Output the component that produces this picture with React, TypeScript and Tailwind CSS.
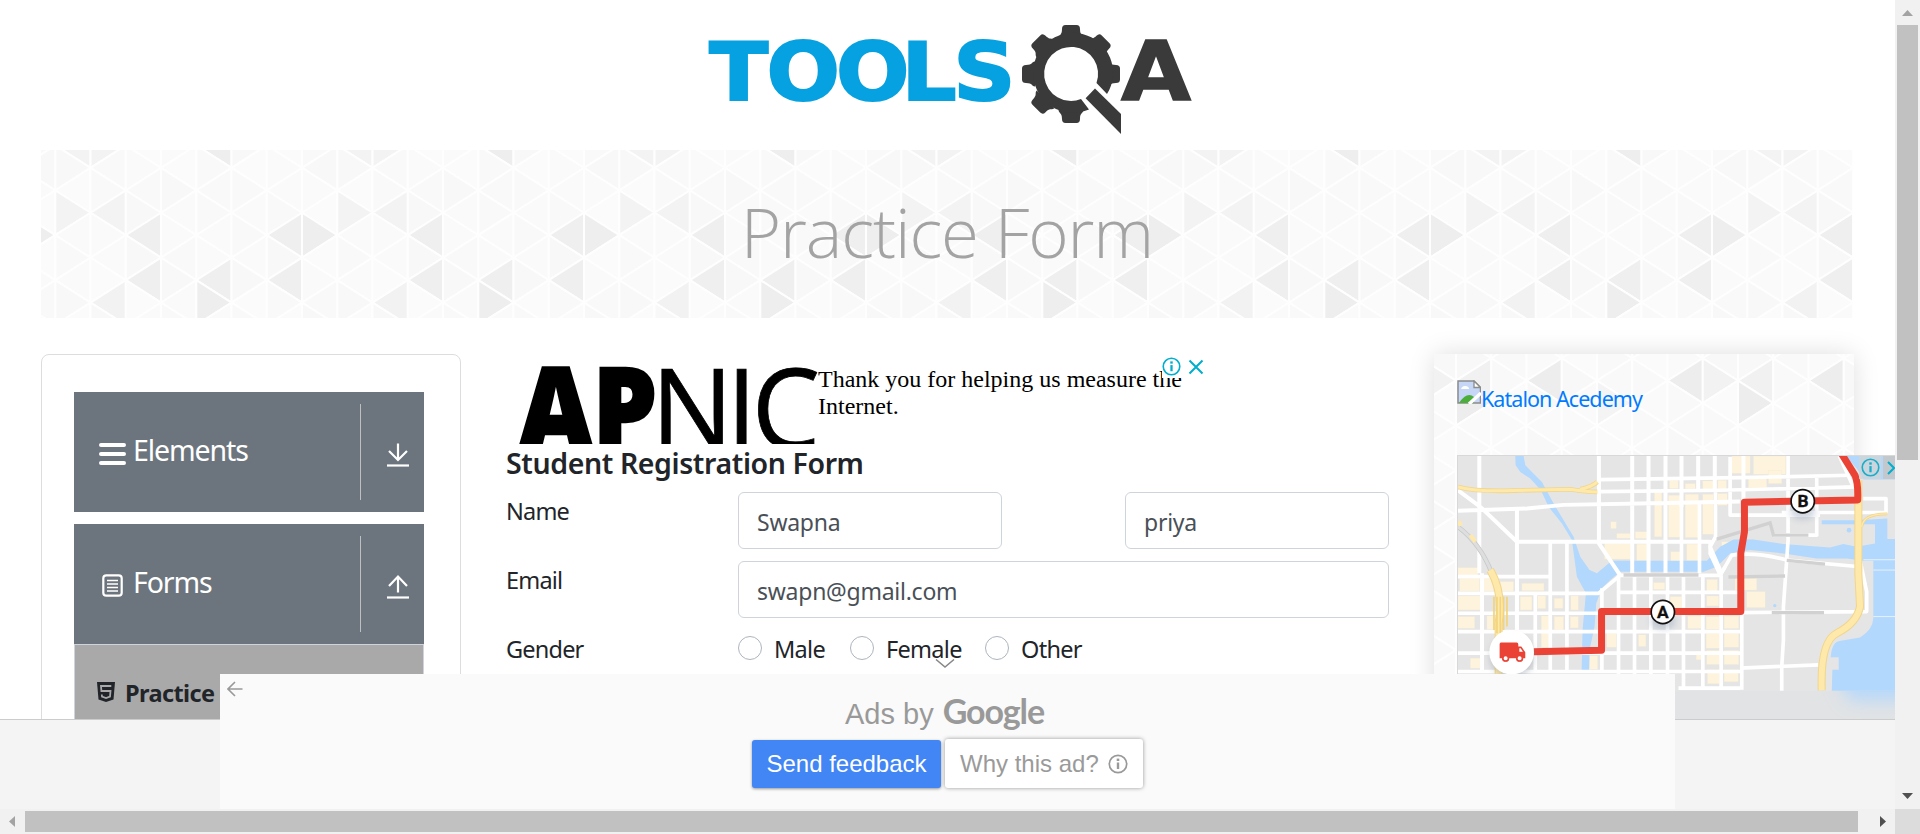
import React from "react";

const BODY = "font-['Noto_Sans','Open_Sans',sans-serif]";

type Tri = { c: number; y: number; dir: "l" | "r"; fill: string };

/* Triangle tile: eight columns wide, repeated across the surface. */
function Triangles({
  width,
  height,
  originX,
  evenY,
  accents,
}: {
  width: number;
  height: number;
  originX: number;
  evenY: number;
  accents: Tri[];
}) {
  const W = 35.25;
  const H = 22.45;
  const shapes: React.ReactNode[] = [];
  const shades = ["#f9f9f9", "#fafafa", "#f8f8f8", "#fbfbfb", "#f9f9f9", "#fafafa"];
  const cols = Math.ceil(width / W) + 1;
  const rows = Math.ceil(height / H) + 2;
  for (let k = -1; k < cols; k++) {
    const x0 = originX + k * W;
    const x1 = x0 + W;
    const km = ((k % 8) + 8) % 8;
    for (let j = -3; j < rows; j++) {
      const y = evenY + j * H;
      const apexLeft = (Math.abs(j) % 2 === 0) === (km % 2 === 0);
      const dir = apexLeft ? "l" : "r";
      const hit = accents.find((a) => a.c === km && a.y === j && a.dir === dir);
      const fill = hit ? hit.fill : shades[(km * 5 + (j + 9) * 7 + ((km * (j + 9)) % 5)) % 6];
      const d = apexLeft
        ? `M${x0} ${y}L${x1} ${y - H}V${y + H}Z`
        : `M${x1} ${y}L${x0} ${y - H}V${y + H}Z`;
      shapes.push(<path key={`${k}-${j}`} d={d} fill={fill} stroke="#fefefe" strokeWidth={2} strokeLinejoin="round" />);
    }
  }
  return (
    <svg className="absolute inset-0" width={width} height={height} aria-hidden="true">
      {shapes}
    </svg>
  );
}

const bannerAccents: Tri[] = [
  { c: 0, y: -2, dir: "l", fill: "#f3f3f3" },
  { c: 1, y: -2, dir: "r", fill: "#f3f3f3" },
  { c: 4, y: -2, dir: "l", fill: "#eeeeee" },
  { c: 0, y: 1, dir: "r", fill: "#f3f3f3" },
  { c: 1, y: 1, dir: "l", fill: "#f3f3f3" },
  { c: 2, y: 2, dir: "l", fill: "#efefef" },
  { c: 6, y: 2, dir: "l", fill: "#efefef" },
  { c: 7, y: 2, dir: "r", fill: "#eeeeee" },
  { c: 2, y: 4, dir: "l", fill: "#efefef" },
  { c: 4, y: 4, dir: "l", fill: "#efefef" },
  { c: 6, y: 4, dir: "l", fill: "#efefef" },
  { c: 1, y: 5, dir: "l", fill: "#f2f2f2" },
  { c: 4, y: 5, dir: "r", fill: "#eeeeee" },
];

const cardAccents: Tri[] = [
  { c: 0, y: 0, dir: "l", fill: "#f1f1f1" },
  { c: 2, y: 0, dir: "l", fill: "#ededed" },
  { c: 6, y: 0, dir: "l", fill: "#ededed" },
  { c: 7, y: 0, dir: "r", fill: "#f2f2f2" },
  { c: 0, y: 1, dir: "r", fill: "#ededed" },
  { c: 4, y: 1, dir: "r", fill: "#f4f4f4" },
];

function Logo() {
  const teeth = [0, 45, 90, 180, 225, 270, 315];
  return (
    <svg className="block" width="540" height="150" viewBox="0 0 540 150" aria-label="TOOLSQA">
      <g fill="#06a1e0" stroke="#06a1e0" strokeWidth="2" fontFamily="'DejaVu Sans'" fontWeight="700" fontSize="80">
        <text transform="translate(0 99.500) scale(1.080 1)" x="27 80 144.500 205 253">TOOLS</text>
      </g>
      <g transform="translate(391 74)" fill="#3a3a3b">
        {teeth.map((a) => (
          <path key={a} transform={`rotate(${a})`} d="M-12.500 -36C-12 -40 -9 -38 -9 -45Q-9 -49 -5.500 -49H5.500Q9 -49 9 -45C9 -38 12 -40 12.500 -36Z" />
        ))}
        <path fillRule="evenodd" d="M36 20A40 40 0 1 0 18 35.500L10 25A27 27 0 1 1 25.500 9Z" />
        <path d="M14.600 24.300L24 14.500L50 40V60Z" />
      </g>
      <text x="441" y="99.500" fill="#3a3a3b" stroke="#3a3a3b" strokeWidth="1.500" fontFamily="'DejaVu Sans'" fontWeight="700" fontSize="82" textLength="70" lengthAdjust="spacingAndGlyphs">A</text>
    </svg>
  );
}

function ArrowBar({ up }: { up?: boolean }) {
  return (
    <svg width="24" height="26" viewBox="0 0 24 26" fill="none" stroke="#fff" strokeWidth="2.200">
      {up ? <path d="M12 18.500V2.500M3 12L12 2.500L21 12" /> : <path d="M12 1.500V18M3 9L12 18L21 9" />}
      <path d="M1 23.500H23" />
    </svg>
  );
}

function MenuHeader({ label, icon, up }: { label: string; icon: React.ReactNode; up?: boolean }) {
  return (
    <div className="flex h-[120px] w-[350px] bg-[#6c757d] py-3 text-white">
      <div className="flex h-24 w-[287px] items-center border-r border-[#bfbfbf] pl-[25px]">
        <span className="mt-[3px] flex w-[27px] justify-center">{icon}</span>
        <span className="mt-[-3px] ml-[7px] text-[28.500px] leading-none tracking-[-1.1px]">{label}</span>
      </div>
      <div className="flex w-[63px] items-center justify-center pl-[11px] pt-[5px]">
        <ArrowBar up={up} />
      </div>
    </div>
  );
}

function InfoIcon({ color, size }: { color: string; size: number }) {
  return (
    <svg width={size} height={size} viewBox="0 0 20 20" fill="none" stroke={color}>
      <circle cx="10" cy="10" r="8.700" strokeWidth="1.700" />
      <path d="M10 8.500V15" strokeWidth="2.400" />
      <path d="M10 4.600V7" strokeWidth="2.600" />
    </svg>
  );
}

function BannerAd() {
  return (
    <div className="relative flex h-[90px] w-[702px] overflow-hidden bg-white pl-[13px]">
      <svg className="block shrink-0" width="299" height="90" viewBox="519 354 299 90" aria-label="APNIC">
        <g fill="#000" stroke="#000" fontFamily="'Open Sans'">
          <text x="519" y="448.500" fontSize="114" fontWeight="800" textLength="138" lengthAdjust="spacingAndGlyphs" strokeWidth="2.500">AP</text>
          <text transform="translate(0 448.500) scale(0.970 1)" fontSize="112" fontWeight="400" strokeWidth="0.800" x="671.500 749 775">NIC</text>
        </g>
      </svg>
      <p className="pt-[12px] font-['Liberation_Serif',serif] text-[24px] leading-[27px] text-black">
        Thank you for helping us measure the
        <br />
        Internet.
      </p>
      <div className="absolute right-[4px] top-0 flex h-[24px] items-center gap-[7px] bg-white pt-[1px]">
        <InfoIcon color="#00aecd" size={19} />
        <svg width="16" height="16" viewBox="0 0 16 16" stroke="#00aecd" strokeWidth="2">
          <path d="M1.500 1.500L14.500 14.500M14.500 1.500L1.500 14.500" />
        </svg>
      </div>
    </div>
  );
}

function Radio({ label, className }: { label: string; className: string }) {
  return (
    <label className={`flex items-center ${className}`}>
      <span className="mt-[-4px] size-6 rounded-full border border-[#adb5bd] bg-white" />
      <span className="ml-3 text-[23.500px] leading-none tracking-[-0.7px]">{label}</span>
    </label>
  );
}

const field = "h-[57px] rounded-[6px] border border-[#ced4da] bg-white pl-[18px] pt-[4px] text-[23px] leading-none text-[#495057] flex items-center tracking-[-0.25px]";
const caption = "w-[232px] pt-[6px] text-[23.500px] leading-[26px] tracking-[-0.8px]";

function StudentForm() {
  return (
    <div className="w-[883px] text-[#212529]">
      <BannerAd />
      <h5 className="h-[48px] whitespace-nowrap pt-[3px] text-[28.500px] font-semibold leading-[32px] tracking-[-0.4px]">Student Registration Form</h5>
      <div className="flex h-[69px]">
        <span className={caption}>Name</span>
        <div className={`w-[264px] ${field}`}>Swapna</div>
        <div className={`ml-[123px] w-[264px] ${field}`}>priya</div>
      </div>
      <div className="flex h-[69px]">
        <span className={caption}>Email</span>
        <div className={`w-[651px] ${field}`}>swapn@gmail.com</div>
      </div>
      <div className="flex h-[60px]">
        <span className={caption}>Gender</span>
        <div className="flex h-[40px]">
          <Radio label="Male" className="w-[112px]" />
          <Radio label="Female" className="w-[135px]" />
          <Radio label="Other" className="w-[120px]" />
        </div>
      </div>
    </div>
  );
}

/* City map used by the delivery ad. */
function CityMap() {
  const yellowBlocks: [number, number, number, number][] = [
    [935, 347, 55, 52], [1000, 347, 97, 55], [748, 420, 26, 25], [795, 430, 30, 16], [848, 422, 32, 26], [893, 420, 26, 28], [985, 415, 55, 28], [1045, 390, 40, 40],
    [703, 455, 22, 135], [745, 465, 36, 126], [795, 462, 40, 130], [848, 462, 32, 120], [893, 460, 28, 35], [572, 545, 16, 20], [645, 575, 40, 20], [590, 580, 40, 14],
    [553, 610, 78, 47], [650, 612, 34, 50], [752, 635, 28, 28], [800, 612, 36, 50], [905, 605, 40, 20],
    [113, 683, 60, 24], [118, 715, 60, 38], [190, 715, 30, 38], [240, 725, 40, 28], [305, 730, 66, 22], [113, 768, 68, 42], [300, 770, 35, 40], [352, 768, 24, 38], [402, 775, 26, 30], [452, 768, 22, 42],
    [113, 830, 50, 35], [200, 828, 40, 40], [363, 828, 25, 95], [402, 830, 28, 40], [450, 830, 24, 34], [560, 880, 28, 42], [655, 885, 22, 35], [700, 728, 34, 20], [750, 770, 35, 35],
    [860, 718, 32, 38], [945, 715, 65, 35], [980, 755, 55, 48], [860, 768, 36, 30], [803, 828, 40, 38], [858, 830, 40, 38], [912, 828, 44, 38], [858, 880, 42, 45], [912, 880, 44, 42],
    [828, 935, 16, 25], [860, 932, 40, 42], [912, 932, 44, 42], [862, 990, 36, 42], [912, 990, 42, 36], [150, 955, 34, 30], [508, 948, 24, 40],
  ];
  return (
    <svg className="absolute inset-0 h-full w-full" viewBox="113 347 1312 791" preserveAspectRatio="none" fill="none">
      <defs>
        <filter id="soft" x="-20%" y="-80%" width="140%" height="260%"><feGaussianBlur stdDeviation="26" /></filter>
        <filter id="glow" x="-60%" y="-60%" width="220%" height="220%"><feGaussianBlur stdDeviation="10" /></filter>
        <clipPath id="blurBand"><rect x="113" y="1052" width="1312" height="90" /></clipPath>
      </defs>
      <rect x="113" y="347" width="1312" height="800" fill="#e5e5e5" />
      <g fill="#fef4dd" stroke="#f4ead2" strokeWidth="1">
        {yellowBlocks.map(([x, y, w, h]) => <rect key={`${x}-${y}`} x={x} y={y} width={w} height={h} />)}
      </g>
      <g fill="#b2d8fd">
        <path d="M285 347H310L315 375L365 425L400 490L460 590L480 650L508 690L530 700L575 662H860L900 620L940 598L1000 598L1090 612L1230 622L1270 612L1310 620L1365 610V552H1205V540L1310 540L1402 535V597H1425V1060H1235L1237 990H1256V952H1232Q1235 905 1262 903L1320 893Q1358 870 1360 835V662H1330L1280 655L1190 655L1090 640L990 630L930 640L890 680L850 695H600L570 720L545 745L528 790L523 860L508 930L506 1000H484L487 870L497 760L470 710L455 600L425 550L385 500L362 450L330 415L300 395L286 375Z" />
        <path d="M1275 347H1425V418H1330Q1320 390 1275 347Z" />
        <circle cx="1287" cy="570" r="7" />
        <circle cx="1064" cy="797" r="5" />
      </g>
      <g stroke="#e6f1fc" strokeWidth="3"><path d="M1330 659H1425M1360 690H1425M1360 830H1425" /></g>
      <g stroke="#fff" strokeWidth="11" strokeLinejoin="round">
        <path d="M177 347V700M185 700V1000M290 510V1000M113 450L180 500L290 605H870M113 512L320 505L430 494L740 488L960 484M536 347V610L600 706M636 347V700M685 347V700M736 347V700M784 347V500M834 347V450M884 347V448M970 347V480" strokeWidth="12" />
        <path d="M536 418L960 412L1290 405M536 454L900 450L1310 440M930 350V525H1200M784 490V700M838 490V700M886 455V590L870 620L905 700M1104 347V600L1090 800V900L1085 980V1055M1190 410V585H1060M1085 517H1398V475H1330" />
        <path d="M113 710H390M113 760H535L600 706H900L935 645Q1010 635 1100 660L1320 680M390 605V760M440 605V760M113 820H540M113 875H960M113 940H960M113 995H960M390 760V1000M440 760V1000M345 760V1000M960 985L1195 975M960 818L1340 815V755L1320 660" />
        <path d="M545 745V1000M595 706V1040M643 706V1040M692 706V1040M742 706V1050M790 706V1050M848 706V1050M903 706V1050M965 820V1050M600 757H960M775 1045H960" />
        <path d="M915 680L900 705L870 640V600M1258 347L1300 440" />
      </g>
      <g stroke="#d1d1d1" strokeWidth="10">
        <path d="M610 705H835M925 711L1095 708M1100 661L1215 672M1055 818H1212M890 597L1050 548L1060 585H1165" />
        <path d="M113 560Q180 610 215 700" strokeWidth="14" stroke="#c6c8ca" />
        <path d="M113 560Q180 610 215 700" strokeWidth="9" stroke="#dedede" />
      </g>
      <g stroke="#f1d58a" strokeWidth="18">
        <path d="M113 440Q170 455 280 451L450 447Q500 455 531 455M480 447Q515 440 531 425" strokeWidth="14" />
        <path d="M210 690Q250 760 235 850V1002M1315 420V700L1320 800Q1310 850 1250 880Q1200 905 1205 1052" strokeWidth="24" />
        <path d="M1325 560Q1330 520 1402 521" strokeWidth="8" />
      </g>
      <g stroke="#fee9ab" strokeWidth="14">
        <path d="M113 440Q170 455 280 451L450 447Q500 455 531 455M480 447Q515 440 531 425" strokeWidth="9" />
        <path d="M210 690Q250 760 235 850V1002M1315 420V700L1320 800Q1310 850 1250 880Q1200 905 1205 1052" strokeWidth="18" />
        <path d="M1325 560Q1330 520 1402 521" strokeWidth="4" />
        <path d="M150 585L165 605M115 543L122 556" strokeWidth="12" />
      </g>
      <path d="M221 770V870M230 770V880M240 770V880M250 770V870M260 770V860" stroke="#f3d47c" strokeWidth="5" />
      <g clipPath="url(#blurBand)">
        <rect x="113" y="1052" width="1312" height="90" fill="#e1e3e5" />
        <path filter="url(#soft)" d="M1230 960H1520V1082H1290Z" fill="#b5d8fa" />
      </g>
      <path d="M1258 330L1305 405Q1315 430 1313 479L973 486V575L962 640V815H544V931L340 936" stroke="#ea4335" strokeWidth="21" strokeLinejoin="round" />
      <ellipse cx="728" cy="845" rx="38" ry="24" fill="#9aa7bd" opacity=".45" filter="url(#glow)" />
      <ellipse cx="1148" cy="515" rx="38" ry="24" fill="#9aa7bd" opacity=".45" filter="url(#glow)" />
      <g fill="#fff" stroke="#111" strokeWidth="5">
        <circle cx="728" cy="816" r="35" />
        <circle cx="1148" cy="483" r="35" />
      </g>
      <g fill="#111" stroke="#111" strokeWidth="1" fontFamily="Roboto" fontWeight="700" fontSize="52" textAnchor="middle">
        <text x="728" y="834">A</text>
        <text x="1149" y="501">B</text>
      </g>
      <circle cx="275" cy="950" r="66" fill="#7d8794" opacity=".35" filter="url(#glow)" />
      <circle cx="274" cy="937" r="67" fill="#fff" />
      <path d="M242 908H289Q294 908 294 913V920H303L315 937V955H309A11 11 0 0 1 287 955H267A11 11 0 0 1 245 955H238V913Q238 908 242 908Z" fill="#ea4335" />
      <path d="M297 925H301L308 936H297Z" fill="#fff" />
      <g fill="#fff" stroke="#ea4335" strokeWidth="4"><circle cx="256" cy="955" r="8" /><circle cx="298" cy="955" r="8" /></g>
    </svg>
  );
}

function Sidebar() {
  return (
    <aside className="h-[480px] w-[420px] shrink-0 rounded-[8px] border border-[#dddddd] pl-[32px] pt-[37px]">
      <MenuHeader
        label="Elements"
        icon={<svg width="27" height="24" viewBox="0 0 27 24" stroke="#fff" strokeWidth="4" strokeLinecap="round"><path d="M2 3H25M2 12H25M2 21H25" /></svg>}
      />
      <div className="h-3" />
      <MenuHeader
        up
        label="Forms"
        icon={
          <svg width="21" height="23" viewBox="0 0 21 23" fill="none" stroke="#fff">
            <rect x="1.300" y="1.300" width="18.400" height="20.400" rx="3" strokeWidth="2.200" />
            <path d="M5 6.500H16M5 10H16M5 13.500H16M5 17H16" strokeWidth="1.300" />
          </svg>
        }
      />
      <div className="flex h-[120px] w-[350px] items-start border border-[#ced4da] bg-[#a9a9a9] pl-[22px] pt-[37px] text-[#212529]">
        <svg width="18" height="20" viewBox="0 0 18 20" fill="none" className="shrink-0">
          <path d="M0 0H18L16.500 17.500L9 20L1.500 17.500Z" fill="#212529" />
          <path d="M14.300 4H4L4.400 9H13.500L13 14.500L9 16L5 14.500L4.800 12.500" stroke="#a9a9a9" strokeWidth="1.800" />
        </svg>
        <span className="ml-[10px] mt-px whitespace-nowrap text-[23.500px] font-bold leading-[20px] tracking-[-0.6px]">Practice Form</span>
      </div>
    </aside>
  );
}

function RightPanel() {
  return (
    <aside className="relative h-[480px] w-[420px] shrink-0 bg-[#fafafa] shadow-[0_0_24px_rgba(0,0,0,0.13)]">
      <div className="absolute inset-0 overflow-hidden">
        <Triangles width={420} height={480} originX={22} evenY={26.7} accents={cardAccents} />
      </div>
      <div className="relative flex h-[101px] pl-[23px] pt-[26px]">
        <svg width="24" height="24" viewBox="0 0 24 24" className="shrink-0">
          <path d="M1 1H17L23.500 7.500V23H1Z" fill="#c5d6f7" stroke="#8c8c8c" strokeWidth="1.500" />
          <path d="M17 1V7.500H23.500Z" fill="#fff" stroke="#8c8c8c" strokeWidth="1.300" />
          <path d="M4 9Q5 6 8 6Q12 6 12 9Z" fill="#fff" />
          <path d="M2 23Q10 11 17 17V23Z" fill="#4cae3a" />
          <path d="M12 24L24 13" stroke="#fff" strokeWidth="3.500" />
        </svg>
        <a className="whitespace-nowrap pt-[6px] text-[21.500px] leading-[26px] tracking-[-0.95px] text-[#007bff]">Katalon Acedemy</a>
      </div>
      <div className="relative ml-[23px] h-[264px] w-[438px] overflow-hidden border-l border-t border-[#d8d8d8]">
        <CityMap />
        <div className="absolute right-0 top-0 flex gap-[2px]">
          <span className="flex h-[23px] w-[22px] items-center justify-center bg-[#d0d4d6]/80"><InfoIcon color="#1aaec8" size={19} /></span>
          <span className="flex h-[23px] w-[12px] items-center bg-[#c4c6c8]/90 pl-1">
            <svg width="8" height="14" viewBox="0 0 8 14" fill="none" stroke="#00aecd" strokeWidth="2"><path d="M1 1L7 7L1 13" /></svg>
          </span>
        </div>
      </div>
    </aside>
  );
}

function AdsByGoogle() {
  return (
    <section className="absolute left-[220px] top-[674px] flex h-[135px] w-[1455px] flex-col items-center bg-[#fafafa] font-['Liberation_Sans',sans-serif]">
      <svg className="absolute left-[7px] top-[7px]" width="16" height="16" viewBox="0 0 16 16" fill="none" stroke="#999" strokeWidth="1.600"><path d="M15.500 8H1.500M8 1L1 8L8 15" /></svg>
      <svg className="absolute left-[715px] top-[-15px]" width="20" height="10" viewBox="0 0 20 10" fill="none" stroke="#888" strokeWidth="1.500"><path d="M1 .5L10 8L19 .5" /></svg>
      <div className="flex h-[66px] items-baseline pr-[6px] pt-[20px] text-[29px] leading-[33px] text-[#999999]">
        <span>Ads by</span>
        <span className="ml-[9px] font-['Lato',sans-serif] text-[34px] font-bold leading-[33px] tracking-[-1.1px]">Google</span>
      </div>
      <div className="flex gap-1">
        <button className="h-[48px] w-[189px] rounded-[3px] bg-[#4285f4] text-[24px] leading-none text-white shadow-[0_1px_3px_rgba(0,0,0,0.4)]">Send feedback</button>
        <button className="mt-[-1px] flex h-[49px] w-[198px] items-center rounded-[3px] bg-white pl-[15px] text-[24px] leading-none text-[#9a9a9a] shadow-[0_0_4px_rgba(0,0,0,0.4)]">
          <span>Why this ad?</span>
          <span className="ml-[9px]"><InfoIcon color="#999" size={20} /></span>
        </button>
      </div>
    </section>
  );
}

export default function App() {
  return (
    <div className={`flex h-[834px] w-[1920px] flex-col overflow-hidden bg-white ${BODY}`}>
      <div className="flex h-[809px]">
        <main className="relative h-[809px] w-[1895px] overflow-hidden">
          <header className="h-[150px] pl-[680px]"><Logo /></header>
          <div className="relative ml-[41px] flex h-[168px] w-[1812px] items-center justify-center overflow-hidden bg-[#fafafa] pb-[6px]">
            <Triangles width={1812} height={168} originX={14.3} evenY={40.3} accents={bannerAccents} />
            <h1 className="relative whitespace-nowrap font-['Open_Sans',sans-serif] text-[69px] font-light leading-none tracking-[-1.1px] text-[#a3a3a3]">Practice Form</h1>
          </div>
          <div className="flex pl-[41px] pt-9">
            <Sidebar />
            <div className="ml-[45px] w-[928px] shrink-0"><StudentForm /></div>
            <RightPanel />
          </div>
          <footer className="absolute inset-x-0 bottom-0 h-[90px] border-t border-[#cccccc] bg-[#f4f4f4]" />
          <AdsByGoogle />
        </main>
        <div className="flex w-[25px] flex-col items-center bg-[#f1f1f1]">
          <svg width="25" height="25"><path d="M7 16H18L12.500 10Z" fill="#a3a3a3" /></svg>
          <div className="h-[435px] w-[21px] bg-[#c1c1c1]" />
          <svg className="mt-auto" width="25" height="25"><path d="M7 9H18L12.500 15Z" fill="#505050" /></svg>
        </div>
      </div>
      <div className="flex h-[25px] items-center bg-[#f1f1f1]">
        <svg width="25" height="25"><path d="M15 7V18L9 12.500Z" fill="#a3a3a3" /></svg>
        <div className="h-[21px] w-[1833px] bg-[#c1c1c1]" />
        <svg className="ml-[12px]" width="25" height="25"><path d="M10 7V18L16 12.500Z" fill="#505050" /></svg>
        <div className="h-[25px] w-[25px] bg-[#dcdcdc]" />
      </div>
    </div>
  );
}
